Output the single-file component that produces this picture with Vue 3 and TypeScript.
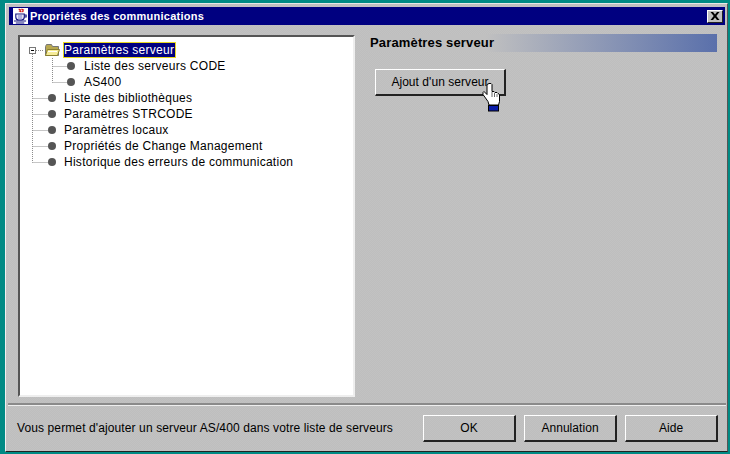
<script setup lang="ts">
const children: string[] = ['Liste des serveurs CODE', 'AS400']
const roots: string[] = [
  'Liste des bibliothèques',
  'Paramètres STRCODE',
  'Paramètres locaux',
  'Propriétés de Change Management',
  'Historique des erreurs de communication',
]
const actions: string[] = ['OK', 'Annulation', 'Aide']
</script>

<template>
  <div class="desktop">
    <div class="window">
      <header class="titlebar">
        <svg class="appicon" width="15" height="16" viewBox="0 0 16 16" preserveAspectRatio="none">
          <rect width="16" height="16" fill="#fff" />
          <path d="M6 1l2 1-1 1 2 1M9 1l2 1-1 1 1 1" fill="none" stroke="#d01818" stroke-width="1.300" />
          <path d="M3 6h9v3q0 3-3 3H6q-3 0-3-3z" fill="#fff" stroke="#101080" stroke-width="1.200" />
          <path d="M12 7h2v2h-2M1 13h13M3 15h9" fill="none" stroke="#101080" stroke-width="1.200" />
          <path d="M5 8h5M5 10h5" stroke="#6060c0" stroke-width="1" />
        </svg>
        <span class="title">Propriétés des communications</span>
        <span class="close">
          <svg width="10" height="8" viewBox="0 0 10 8">
            <path d="M0.500 0h2.500l2 2.500L7 0h2.500L6.300 4l3.200 4H7L5 5.500 3 8H.5l3.200-4z" fill="#000" />
          </svg>
        </span>
      </header>

      <main class="content">
        <section class="tree">
          <svg class="lines" width="60" height="140" viewBox="0 0 60 140">
            <g fill="none" stroke="#8c8c8c" stroke-dasharray="1 1">
              <path d="M12.500 17V125.500M12.500 61.500H28M12.500 77.500H28M12.500 93.500H28M12.500 109.500H28M12.500 125.500H28" />
              <path d="M16 13.500H24M32.500 21V45.500M32.500 29.500H47M32.500 45.500H47" />
            </g>
          </svg>
          <div class="row">
            <span class="expander"></span>
            <svg class="folder" width="16" height="14" viewBox="0 0 16 14">
              <path d="M1.500 3.500l1-2h5l1 2h6v9h-13z" fill="#b8a850" stroke="#777" />
              <path d="M1.500 12.500l2-6h12l-2 6z" fill="#f6ec98" stroke="#8a8030" />
              <path d="M4 8.500h9" stroke="#fff" />
            </svg>
            <span class="label selected">Paramètres serveur</span>
          </div>
          <div v-for="name in children" :key="name" class="row child">
            <span class="bullet"></span>
            <span class="label">{{ name }}</span>
          </div>
          <div v-for="name in roots" :key="name" class="row root">
            <span class="bullet"></span>
            <span class="label">{{ name }}</span>
          </div>
        </section>

        <section class="detail">
          <h2 class="heading">Paramètres serveur</h2>
          <div class="actionwrap">
            <button class="btn add">Ajout d'un serveur</button>
            <svg class="hand" width="20" height="30" viewBox="0 0 20 30">
              <path d="M8 .5h2l1 1v7h2l1 1h2l1 1 1.500 1v7l-1 3.500H8l-1-3.500-5-7v-2l1-1 3 3V1.500z" fill="#fff" stroke="#000" stroke-width="1" />
              <path d="M11 9v5M13.500 10v4M16 11v3" stroke="#666" stroke-width="1" />
              <rect x="7.500" y="22.500" width="10" height="5.500" fill="#0a1ca8" stroke="#000" stroke-width="1" />
            </svg>
          </div>
        </section>
      </main>

      <footer class="footer">
        <span class="status">Vous permet d'ajouter un serveur AS/400 dans votre liste de serveurs</span>
        <div class="actions">
          <button v-for="a in actions" :key="a" class="btn action">{{ a }}</button>
        </div>
      </footer>
    </div>
  </div>
</template>

<style>
html, body { margin: 0; padding: 0; }
</style>

<style scoped>
.desktop {
  width: 730px;
  height: 454px;
  box-sizing: border-box;
  padding: 3px 0 0 5px;
  background: #008a84;
  overflow: hidden;
  font-family: "Liberation Sans", Arial, sans-serif;
}
.window {
  width: 723px;
  height: 449px;
  box-sizing: border-box;
  display: flex;
  flex-direction: column;
  padding: 3px 2px 0 3px;
  background-color: #c0c0c0;
  background-image: conic-gradient(#bebebe 25%, #c2c2c2 0 50%, #bebebe 0 75%, #c2c2c2 0);
  background-size: 2px 2px;
  border-top: 1px solid #e8e8e8;
  border-left: 1px solid #f0f0f0;
  border-right: 1px solid #555;
  border-bottom: 1px solid #222;
}
.titlebar {
  height: 18px;
  flex: none;
  display: flex;
  align-items: center;
  padding: 0 2px 0 4px;
  background: #000080;
  color: #fff;
}
.appicon { flex: none; }
.title {
  margin-left: 2px;
  font-size: 11px;
  font-weight: 700;
  letter-spacing: .25px;
  white-space: nowrap;
}
.close {
  margin-left: auto;
  width: 16px;
  height: 13px;
  display: flex;
  align-items: center;
  justify-content: center;
  background: #c0c0c0;
  border: 1px solid;
  border-color: #fff #222 #222 #fff;
  box-sizing: border-box;
}
.content {
  flex: none;
  height: 362px;
  display: flex;
  margin-top: 10px;
}
.tree {
  position: relative;
  width: 337px;
  height: 362px;
  box-sizing: border-box;
  margin-left: 9px;
  padding-top: 5px;
  background: #fff;
  border: 2px solid;
  border-color: #555 #eee #eee #555;
}
.lines { position: absolute; left: 0; top: 0; }
.row {
  position: relative;
  height: 16px;
  display: flex;
  align-items: center;
  font-size: 12px;
  letter-spacing: .27px;
  color: #000;
  white-space: nowrap;
}
.expander {
  width: 7px;
  height: 7px;
  box-sizing: border-box;
  margin-left: 9px;
  border: 1px solid #777;
  background: linear-gradient(#000, #000) center / 3px 1px no-repeat #fff;
}
.folder { margin-left: 8px; margin-right: 4px; }
.selected {
  background: #000080;
  color: #fff;
  outline: 1px solid #e8d820;
  outline-offset: 0;
  padding: 0 1px 0 0;
  line-height: 14px;
}
.bullet {
  width: 8px;
  height: 8px;
  flex: none;
  border-radius: 50%;
  background: #555;
}
.child .bullet { margin-left: 47px; margin-right: 9px; }
.root .bullet { margin-left: 28px; margin-right: 8px; }
.detail {
  margin-left: 12px;
  width: 350px;
}
.heading {
  height: 18px;
  margin: -1px 0 0;
  padding-left: 3px;
  font-size: 13px;
  line-height: 18px;
  letter-spacing: .15px;
  color: #000;
  background: linear-gradient(90deg, #c0c0c0 0 34%, #5a70ab 100%);
}
.actionwrap {
  position: relative;
  margin: 17px 0 0 8px;
  width: 131px;
}
.btn {
  display: block;
  box-sizing: border-box;
  padding: 0;
  font: 12px "Liberation Sans", Arial, sans-serif;
  letter-spacing: .05px;
  color: #000;
  background: transparent;
  border-style: solid;
  border-width: 1px 2px 2px 1px;
  border-color: #fff #222 #222 #fff;
}
.add { width: 131px; height: 27px; text-align: center; }
.hand { position: absolute; left: 106px; top: 14px; }
.footer {
  flex: 1;
  margin-top: 6px;
  border-top: 2px solid;
  border-color: #8a8a8a;
  box-shadow: inset 0 1px 0 #eee;
  margin-left: -1px;
  margin-right: -1px;
  display: flex;
  align-items: flex-start;
  justify-content: space-between;
  padding: 10px 8px 0 9px;
}
.status {
  font-size: 12px;
  line-height: 26px;
  letter-spacing: .11px;
  color: #000;
  white-space: nowrap;
}
.actions { display: flex; gap: 8px; }
.action { width: 93px; height: 27px; }
</style>
